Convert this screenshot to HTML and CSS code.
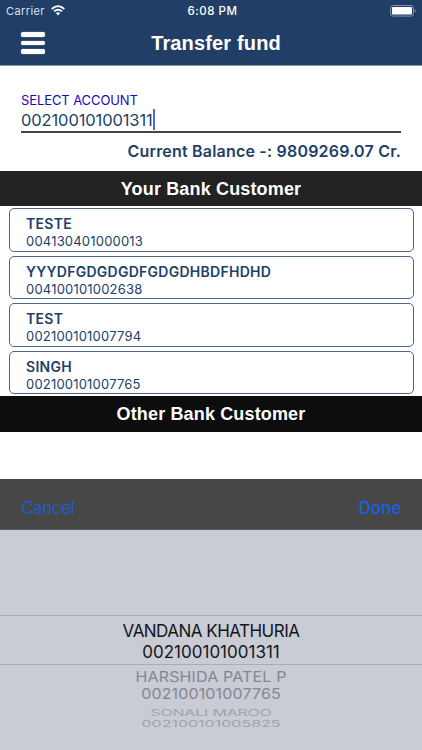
FILE: index.html
```html
<!DOCTYPE html>
<html lang="en">
<head>
<meta charset="utf-8">
<title>Transfer fund</title>
<link rel="stylesheet" href="styles.css">
</head>
<body>
<div class="screen">
  <header class="top">
    <div class="status">
      <div class="carrier"><span>Carrier</span>
        <svg class="wifi" width="14" height="11" viewBox="0 0 14 11" fill="none" stroke="#fff" stroke-width="1.8"><path d="M.7 4Q7-1.7 13.3 4M3 6.4Q7 3 11 6.4"/><path d="M4.8 8.1Q7 6.3 9.2 8.1L7 10.4Z" fill="#fff" stroke="none"/></svg>
      </div>
      <div class="time">6:08 PM</div>
      <svg class="battery" width="27" height="12" viewBox="0 0 27 12"><rect x=".5" y=".5" width="23" height="10.6" rx="2.5" fill="none" stroke="#8291aa"/><rect x="2" y="2" width="20" height="7.6" rx="1" fill="#fff"/><path d="M24.7 4Q27 5.8 24.7 7.6Z" fill="#8291aa"/></svg>
    </div>
    <div class="nav">
      <div class="menu"><i></i><i></i><i></i></div>
      <h1>Transfer fund</h1>
    </div>
  </header>
  <section class="account">
    <div class="label">SELECT ACCOUNT</div>
    <div class="field"><span>002100101001311</span><i class="caret"></i></div>
    <div class="balance">Current Balance -: 9809269.07 Cr.</div>
  </section>
  <h2 class="band">Your Bank Customer</h2>
  <div class="list">
    <div class="card"><b>TESTE</b><span>004130401000013</span></div>
    <div class="card"><b>YYYDFGDGDGDFGDGDHBDFHDHD</b><span>004100101002638</span></div>
    <div class="card"><b>TEST</b><span>002100101007794</span></div>
    <div class="card"><b>SINGH</b><span>002100101007765</span></div>
  </div>
  <h2 class="band other">Other Bank Customer</h2>
  <div class="toolbar"><span>Cancel</span><b>Done</b></div>
  <div class="picker">
    <div class="selected"><div class="name">VANDANA KHATHURIA</div><div class="number">002100101001311</div></div>
    <div class="next"><div class="name">HARSHIDA PATEL P</div><div class="number">002100101007765</div></div>
    <div class="far"><div class="name">SONALI MAROO</div><div class="number">002100101005825</div></div>
  </div>
</div>
</body>
</html>
```
FILE: styles.css
```css
* { box-sizing: border-box; }
body { margin: 0; background: #fff; font-family: Inter, sans-serif; }
.screen { width: 422px; height: 750px; overflow: hidden; display: flex; flex-direction: column; color: #213f68; }
.top { height: 66px; flex: none; background: #213f66; color: #fff; border-bottom: 1px solid #8996aa; }
.status { height: 22px; display: grid; grid-template-columns: 1fr auto 1fr; align-items: center; padding: 0 5px 0 6px; font-size: 11px; }
.carrier { display: flex; gap: 6px; align-items: center; color: #dce2eb; letter-spacing: .4px; }
.wifi { margin-top: -1px; }
.time { font-size: 11.5px; font-weight: 500; letter-spacing: .5px; padding-left: 2px; }
.battery { justify-self: end; margin-top: -1px; }
.nav { height: 43px; display: grid; grid-template-columns: 60px 1fr 60px; padding-right: 3px; }
.menu { display: flex; flex-direction: column; gap: 4px; padding: 10px 0 0 21px; }
.menu i { width: 24px; height: 4.6px; border-radius: 2.3px; background: #fff; box-shadow: 0 0 1px #fff; }
h1 { margin: 0; text-align: center; font: bold 20px/43px "Liberation Sans", sans-serif; letter-spacing: .15px; white-space: nowrap; padding-left: 13px; }
.account { height: 105px; flex: none; padding: 27px 21px 0; }
.label { font-size: 13px; line-height: 15px; letter-spacing: -.1px; color: #2008bd; }
.field { height: 25px; display: flex; border-bottom: 2px solid #444; font-size: 16.5px; line-height: 24px; letter-spacing: -.12px; }
.caret { width: 2px; height: 21px; margin-top: 1px; background: #426bf2; }
.balance { text-align: right; font-size: 16px; font-weight: 600; letter-spacing: .2px; line-height: 20px; margin-top: 8px; white-space: nowrap; }
.band { height: 35px; flex: none; margin: 0; background: #222; color: #fff; text-align: center; font: bold 18px/37px "Liberation Sans", sans-serif; letter-spacing: .15px; }
.list { height: 190px; flex: none; padding: 2px 8.5px 0; display: flex; flex-direction: column; gap: 4px; }
.card { height: 43.5px; flex: none; border: 1px solid #4e6586; border-radius: 5px; padding: 6px 16.5px 0; }
.card b, .card span { display: block; white-space: nowrap; width: max-content; }
.card b { font-size: 14px; line-height: 18px; font-weight: 600; letter-spacing: .27px; }
.card span { font-size: 13px; line-height: 17px; letter-spacing: .2px; }
.other { background: #0d0d0d; height: 36px; }
.toolbar { height: 51px; flex: none; margin-top: 47px; background: #474747; border-bottom: 1px solid #5b5c60; display: flex; justify-content: space-between; padding: 6px 21px 0; line-height: 46px; font-size: 17px; letter-spacing: -.4px; color: #235bc7; }
.toolbar b { font-weight: 600; letter-spacing: -.2px; color: #1c5ed8; }
.picker { flex: 1; background: #c9cbd5; padding-top: 85px; text-align: center; white-space: nowrap; }
.selected { height: 50px; border: solid #a9acb5; border-width: 1px 0; padding-top: 5px; color: #15171a; font-size: 17px; line-height: 20.5px; }
.selected .name { letter-spacing: -.52px; }
.next { height: 40px; padding-top: 3px; color: #85878f; font-size: 16px; line-height: 20px; letter-spacing: .15px; transform: scaleY(.88); transform-origin: top; }
.far { padding-top: 6px; color: #a0a2aa; font-size: 16px; line-height: 20px; transform: scaleY(.52); transform-origin: top; }
.far .name { letter-spacing: -.2px; }
```
